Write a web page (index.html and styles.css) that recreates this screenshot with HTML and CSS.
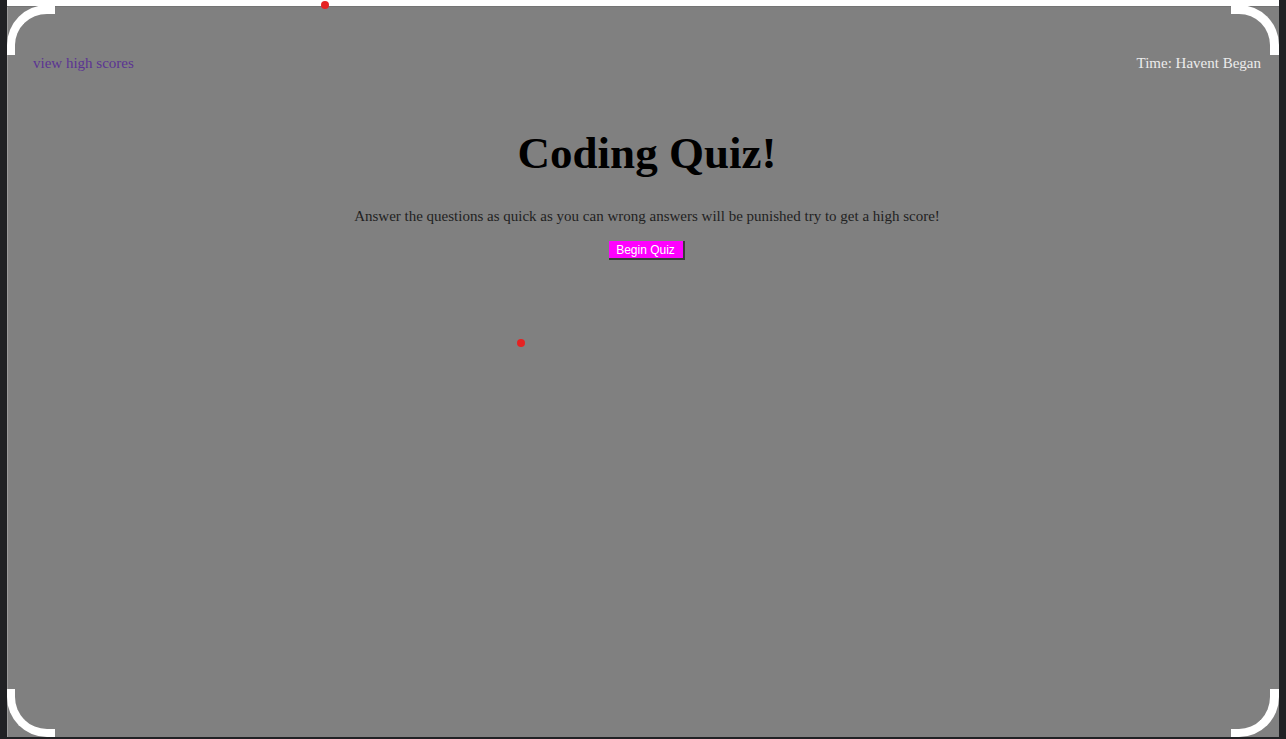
FILE: index.html
```html
<!DOCTYPE html>
<html lang="en">
<head>
<meta charset="utf-8">
<title>Coding Quiz</title>
<link rel="stylesheet" href="styles.css">
</head>
<body>
<div class="page">
  <header class="topbar">
    <a class="scores-link" href="#">view high scores</a>
    <span class="timer">Time: Havent Began</span>
  </header>
  <main class="intro">
    <h1 class="title">Coding Quiz!</h1>
    <p class="lead">Answer the questions as quick as you can wrong answers will be punished try to get a high score!</p>
    <button class="start-btn" type="button">Begin Quiz</button>
  </main>
</div>
<div class="corner corner-tl"></div>
<div class="corner corner-tr"></div>
<div class="corner corner-bl"></div>
<div class="corner corner-br"></div>
<div class="dot dot-a"></div>
<div class="dot dot-b"></div>
</body>
</html>
```

FILE: styles.css
```css
html, body {
  margin: 0;
  padding: 0;
  height: 739px;
  overflow: hidden;
}
body {
  background: #202124;
  position: relative;
  font-family: "Liberation Serif", "Times New Roman", serif;
}
.page {
  margin-left: 7px;
  width: 1272px;
  height: 731px;
  background: #808080;
  border-top: 6px solid #ffffff;
  box-shadow: inset 0 1px 0 #747474, inset 1px 0 0 #9a9a9a;
}
.topbar {
  display: flex;
  justify-content: space-between;
  align-items: baseline;
  padding: 49px 18px 0 26px;
  font-size: 15px;
  line-height: 17px;
}
.scores-link {
  color: #5b3493;
  text-decoration: none;
}
.timer {
  color: #ececec;
}
.intro {
  display: flex;
  flex-direction: column;
  align-items: center;
  padding-left: 8px;
}
.title {
  margin: 55px 0 0;
  font-size: 45px;
  font-weight: bold;
  color: #000;
  line-height: 52px;
}
.lead {
  margin: 29px 0 0;
  font-size: 15px;
  color: #222;
  line-height: 17px;
}
.start-btn {
  margin-top: 16px;
  background: #ff00ff;
  color: #ffffff;
  font-family: "Liberation Sans", Arial, sans-serif;
  font-size: 12px;
  line-height: 14px;
  padding: 2px 8px 1px 7px;
  border: 0;
  border-right: 2px solid #3a3a3a;
  border-bottom: 2px solid #3a3a3a;
  border-radius: 0;
}
.corner {
  position: absolute;
  width: 48px;
  height: 48px;
  box-sizing: border-box;
  border: 0 solid #ffffff;
}
.corner-tl {
  left: 7px;
  top: 5px;
  height: 50px;
  border-top-width: 9px;
  border-left-width: 8px;
  border-top-left-radius: 40px;
}
.corner-tr {
  left: 1231px;
  top: 5px;
  height: 50px;
  border-top-width: 9px;
  border-right-width: 9px;
  border-top-right-radius: 40px;
}
.corner-bl {
  left: 7px;
  top: 689px;
  border-bottom-width: 8px;
  border-left-width: 8px;
  border-bottom-left-radius: 40px;
}
.corner-br {
  left: 1231px;
  top: 689px;
  border-bottom-width: 8px;
  border-right-width: 9px;
  border-bottom-right-radius: 40px;
}
.dot {
  position: absolute;
  width: 8px;
  height: 8px;
  border-radius: 50%;
  background: #e52222;
}
.dot-a {
  left: 321px;
  top: 1px;
}
.dot-b {
  left: 517px;
  top: 339px;
}
```
